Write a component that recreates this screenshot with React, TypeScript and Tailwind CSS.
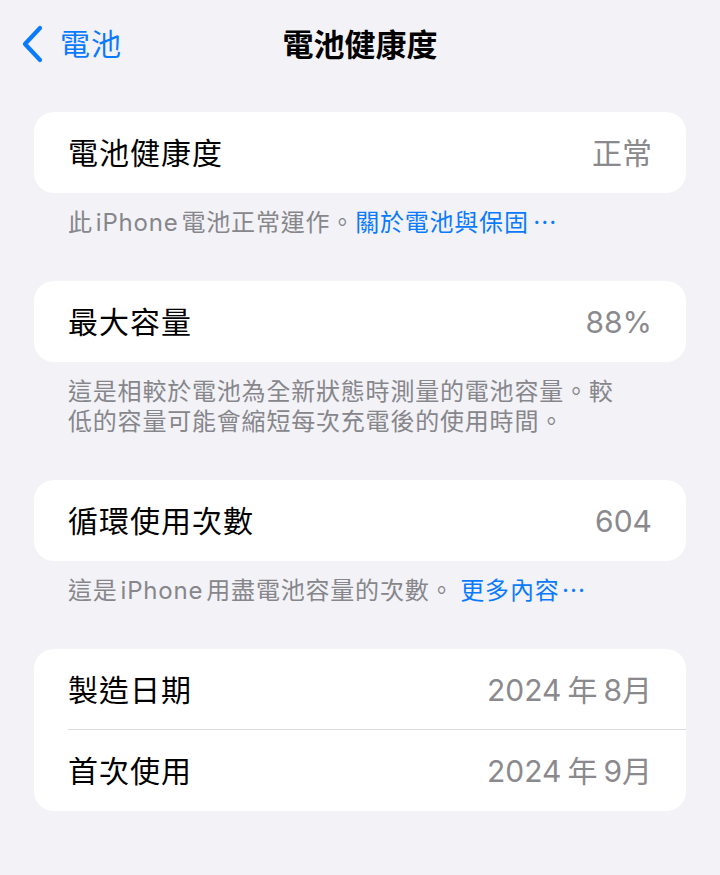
const font = { fontFamily: '"Inter", "Noto Sans CJK TC", sans-serif' }

function Row({ label, value, divider }: { label: string; value: React.ReactNode; divider?: boolean }) {
  return (
    <div className="relative flex h-[81px] items-center justify-between pl-[34px] pr-[34px]">
      <span className="text-[30px] tracking-[1px] text-black">{label}</span>
      <span className="text-[30px] text-[#8a8a8e]">{value}</span>
      {divider && <div className="absolute bottom-0 left-[34px] right-0 h-px bg-[#dcdce0]" />}
    </div>
  )
}

function Card({ children }: { children: React.ReactNode }) {
  return <div className="mx-[34px] overflow-hidden rounded-[20px] bg-white">{children}</div>
}

function Note({ children }: { children: React.ReactNode }) {
  return <p className="px-[68px] pt-[15px] text-[24px] leading-[30px] tracking-[0.8px] text-[#86868b]">{children}</p>
}

function Date({ y, m }: { y: string; m: string }) {
  return (
    <>
      {y}
      <span className="mx-[6px]">年</span>
      {m}月
    </>
  )
}

export default function App() {
  return (
    <div className="min-h-[875px] w-[720px] bg-[#f2f2f7] leading-none" style={font}>
      <nav className="relative flex h-[88px] items-center">
        <div className="flex items-center pl-[20px]">
          <svg width="26" height="40" viewBox="0 0 26 40" className="mr-[14px]">
            <path d="M20 4 L5 20 L20 36" fill="none" stroke="#0a7aff" strokeWidth="4.2" strokeLinecap="round" strokeLinejoin="round" />
          </svg>
          <span className="text-[30px] tracking-[1px] text-[#0a7aff]">電池</span>
        </div>
        <h1 className="absolute left-1/2 -translate-x-1/2 text-[31px] font-semibold text-black">電池健康度</h1>
      </nav>

      <div className="pt-[24px]">
        <Card>
          <Row label="電池健康度" value="正常" />
        </Card>
        <Note>
          此<span className="mx-[3px]">iPhone</span>電池正常運作。<span className="text-[#0a7aff]">關於電池與保固<span className="ml-[4px]">⋯</span></span>
        </Note>
      </div>

      <div className="pt-[43px]">
        <Card>
          <Row label="最大容量" value="88%" />
        </Card>
        <Note>
          這是相較於電池為全新狀態時測量的電池容量。較
          <br />
          低的容量可能會縮短每次充電後的使用時間。
        </Note>
      </div>

      <div className="pt-[43px]">
        <Card>
          <Row label="循環使用次數" value="604" />
        </Card>
        <Note>
          這是<span className="mx-[3px]">iPhone</span>用盡電池容量的次數。<span className="ml-[6px] text-[#0a7aff]">更多內容<span className="ml-[2px]">⋯</span></span>
        </Note>
      </div>

      <div className="pt-[43px]">
        <Card>
          <Row label="製造日期" value={<Date y="2024" m="8" />} divider />
          <Row label="首次使用" value={<Date y="2024" m="9" />} />
        </Card>
      </div>
    </div>
  )
}
